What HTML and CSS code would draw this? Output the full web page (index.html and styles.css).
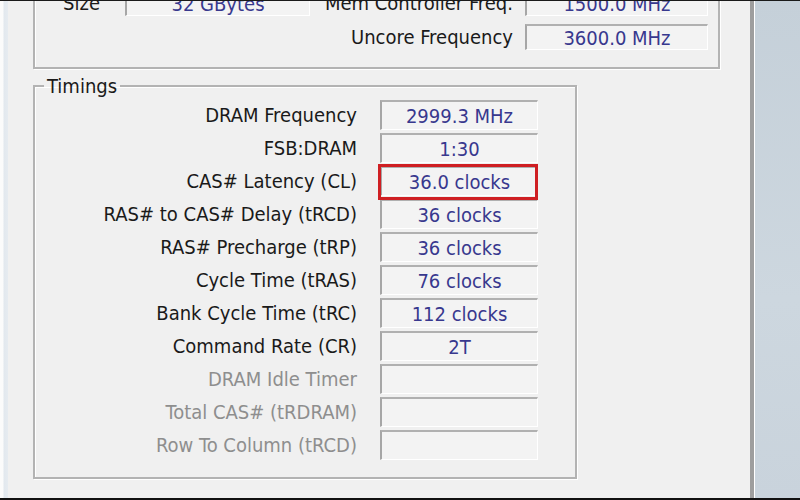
FILE: index.html
```html
<!DOCTYPE html>
<html>
<head>
<meta charset="utf-8">
<link rel="stylesheet" href="styles.css">
</head>
<body>
<div class="screen">
  <div class="left-edge"></div>
  <div class="window">
    <div class="group memory">
      <div class="label">Size</div>
      <div class="field">32 GBytes</div>
      <div class="label label-wide">Mem Controller Freq.</div>
      <div class="field">1500.0 MHz</div>
      <div class="spacer"></div>
      <div class="spacer"></div>
      <div class="label label-wide">Uncore Frequency</div>
      <div class="field">3600.0 MHz</div>
    </div>
    <fieldset class="timings">
      <legend>Timings</legend>
      <div class="rows">
        <div class="label">DRAM Frequency</div><div class="field">2999.3 MHz</div>
        <div class="label">FSB:DRAM</div><div class="field">1:30</div>
        <div class="label">CAS# Latency (CL)</div><div class="field highlight">36.0 clocks</div>
        <div class="label">RAS# to CAS# Delay (tRCD)</div><div class="field">36 clocks</div>
        <div class="label">RAS# Precharge (tRP)</div><div class="field">36 clocks</div>
        <div class="label">Cycle Time (tRAS)</div><div class="field">76 clocks</div>
        <div class="label">Bank Cycle Time (tRC)</div><div class="field">112 clocks</div>
        <div class="label">Command Rate (CR)</div><div class="field">2T</div>
        <div class="label disabled">DRAM Idle Timer</div><div class="field"></div>
        <div class="label disabled">Total CAS# (tRDRAM)</div><div class="field"></div>
        <div class="label disabled">Row To Column (tRCD)</div><div class="field"></div>
      </div>
    </fieldset>
  </div>
  <div class="divider"></div>
  <div class="right-strip"></div>
</div>
</body>
</html>
```

FILE: styles.css
```css
html, body {
  margin: 0;
  padding: 0;
}
body {
  width: 800px;
  height: 500px;
  overflow: hidden;
  background: #f0f0f0;
  font-family: "DejaVu Sans Condensed", "DejaVu Sans", sans-serif;
  font-size: 20px;
  color: #1a1a1a;
}
.screen {
  display: flex;
  height: 500px;
  box-sizing: border-box;
  border-top: 1px solid #1a1a1a;
  border-bottom: 2px solid #111;
}
.left-edge {
  width: 8px;
  background: linear-gradient(to right, #fbfbfb 0, #fbfbfb 3px, #e2e8ee 4px, #e6ebf0 8px);
}
.window {
  width: 742px;
  background: #f0f0f0;
  overflow: hidden;
}
.divider {
  width: 4px;
  background: #9e9e9e;
  border-right: 1px solid #ffffff;
}
.right-strip {
  flex: 1;
  background: linear-gradient(to bottom, #c5d0d9, #cdd7df 60%, #c9d3dc);
}

.group {
  border: 2px solid #b3b3b3;
  box-shadow: inset 1px 1px 0 #fff, 1px 1px 0 #fff;
}
.memory {
  margin: -41px 0 0 25px;
  width: 683px;
  padding: 28px 0 17px 0;
  display: grid;
  grid-template-columns: 90px 185px 215px 183px;
  grid-auto-rows: 26px;
  row-gap: 8px;
  align-items: center;
}
.memory .label {
  text-align: right;
  padding-right: 25px;
}
.memory .label-wide {
  padding-right: 12px;
}

.label {
  white-space: nowrap;
  line-height: 22px;
}
.label.disabled {
  color: #8e8e8e;
}
.field {
  box-sizing: border-box;
  height: 100%;
  background: #f3f3f3;
  border-top: 2px solid #b0b0b0;
  border-left: 2px solid #a6a6a6;
  border-right: 1px solid #ffffff;
  border-bottom: 1px solid #ffffff;
  color: #38388e;
  text-align: center;
  display: flex;
  align-items: center;
  justify-content: center;
  white-space: nowrap;
}

.timings {
  margin: 6px 0 0 25px;
  width: 544px;
  box-sizing: border-box;
  padding: 3px 0 17px 0;
  border: 2px solid #b3b3b3;
  box-shadow: inset 1px 1px 0 #fff, 1px 1px 0 #fff;
  min-width: 0;
}
.timings legend {
  margin-left: 9px;
  padding: 0 3px;
  line-height: 22px;
}
.rows {
  display: grid;
  grid-template-columns: 322px 158px;
  column-gap: 23px;
  grid-auto-rows: 30px;
  row-gap: 3px;
  align-items: center;
}
.rows .label {
  text-align: right;
}
.highlight {
  position: relative;
}
.highlight::after {
  content: "";
  position: absolute;
  left: -4px;
  top: -4px;
  right: -1px;
  bottom: -5px;
  border: 3px solid #cf1f23;
}
```
